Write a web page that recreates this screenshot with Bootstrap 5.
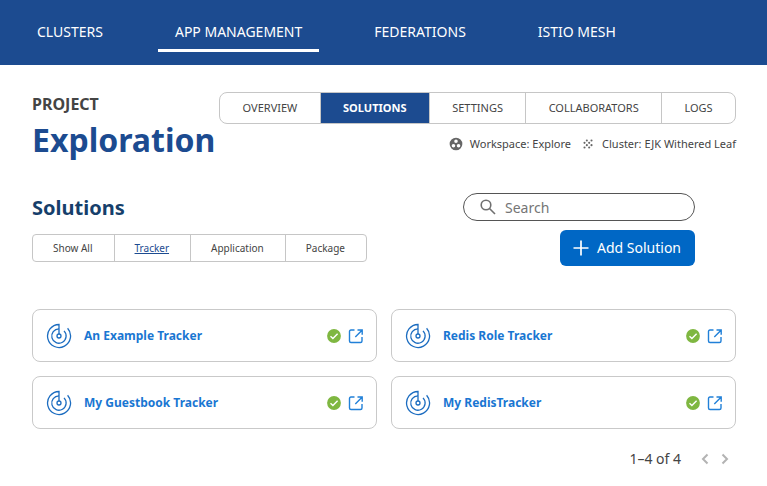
<!DOCTYPE html>
<html lang="en">
<head>
<meta charset="utf-8">
<meta name="viewport" content="width=device-width, initial-scale=1">
<title>Exploration – Solutions</title>
<link href="https://cdn.jsdelivr.net/npm/bootstrap@5.3.0/dist/css/bootstrap.min.css" rel="stylesheet">
<style>
  body { font-family: "Noto Sans", sans-serif; font-size: 14px; line-height: 20px; color: #444; }
  svg { display: block; flex: none; }
  .topbar { background: #1c4b90; padding: 12px 20px 13px; }
  .topbar .nav { gap: 38px; }
  .topbar .nav-link { color: #fff; font-size: 14px; padding: 10px 17px 7px; border-bottom: 3px solid transparent; }
  .topbar .nav-link.active { border-bottom-color: #fff; }
  .page { padding: 27px 31px 16px 32px; }
  .page-title { margin: 0 4px 0 0; }
  .overline { font-size: 16px; line-height: 24px; font-weight: 700; }
  .project-name { font-size: 32px; line-height: 48px; font-weight: 700; color: #1c4b90; }
  .tabs .btn, .filters .btn { --bs-btn-color: #444; --bs-btn-border-color: #c6c6c6; --bs-btn-hover-border-color: #c6c6c6; --bs-btn-active-bg: #1c4b90; --bs-btn-active-color: #fff; --bs-btn-active-border-color: #c6c6c6; white-space: nowrap; }
  .tabs .btn { font-size: 11px; line-height: 16px; padding: 7px 22px; --bs-btn-border-radius: 8px; }
  .tabs .btn.active { font-weight: 700; }
  .filters .btn { font-size: 10px; line-height: 14px; padding: 6px 21px 6px 20px; --bs-btn-border-radius: 4px; }
  .filters .btn.active { --bs-btn-active-bg: #fff; --bs-btn-active-color: #1c4b90; text-decoration: underline; }
  .meta { font-size: 11px; line-height: 16px; gap: 10px; margin-top: 12px; }
  .meta-item { gap: 7px; }
  .solutions-head { margin-top: 29px; padding-right: 41px; }
  .section-title { font-size: 20px; line-height: 30px; font-weight: 700; color: #163f6b; margin-bottom: 11px; }
  .search { width: 232px; height: 28px; border: 1px solid #555; border-radius: 14px; padding: 0 16px; gap: 9px; }
  .search input { font-size: 14px; line-height: 20px; height: 26px; outline: 0; min-width: 0; }
  .search input::placeholder { color: #757575; }
  .btn-add { --bs-btn-bg: #0067c5; --bs-btn-color: #fff; --bs-btn-hover-bg: #00569f; --bs-btn-hover-color: #fff; --bs-btn-border-radius: 6px; font-size: 14px; line-height: 20px; padding: 7px 13px 7px 12px; gap: 8px; margin-top: 9px; }
  .tracker-grid { margin-top: 29px; --bs-gutter-x: 14px; --bs-gutter-y: 14px; }
  .tracker { border: 1px solid #c9c9c9; border-radius: 8px; padding: 0 12px 0 13px; height: 53px; gap: 7px; }
  .tracker-name { font-size: 12px; line-height: 18px; font-weight: 700; color: #1976d2; text-decoration: none; margin-left: 5px; }
  .pager { margin-top: 20px; padding-right: 3px; gap: 4px; }
  .pager-range { margin-right: 12px; }
</style>
<script src="https://cdn.jsdelivr.net/npm/bootstrap@5.3.0/dist/js/bootstrap.bundle.min.js"></script>
</head>
<body>
<svg class="d-none" aria-hidden="true">
  <symbol id="radar" viewBox="0 0 26 26"><g fill="none" stroke="#1b6cc0" stroke-width="1.300"><path d="M13 11V1.500A11.500 11.500 0 1 0 21.600 5.300"/><path d="M13 5.800A7.200 7.200 0 1 0 18 7.900"/><circle cx="13" cy="13" r="2"/></g></symbol>
  <symbol id="check" viewBox="0 0 14 14"><circle cx="7" cy="7" r="6.900" fill="#7fb741"/><path d="M3.500 7.300l2.400 2.300 4.700-4.900" fill="none" stroke="#fff" stroke-width="1.400"/></symbol>
  <symbol id="open" viewBox="0 0 16 16"><path d="M6.500 2H3Q1.500 2 1.500 3.500V13Q1.500 14.500 3 14.500H12.500Q14 14.500 14 13V9M9.500 2H14.200V6.800M14 2.200L7.300 8.900" fill="none" stroke="#2180d8" stroke-width="1.400"/></symbol>
</svg>

<header class="topbar">
  <nav class="nav flex-nowrap text-nowrap" aria-label="Main">
    <a class="nav-link" href="#">CLUSTERS</a>
    <a class="nav-link active" aria-current="page" href="#">APP MANAGEMENT</a>
    <a class="nav-link" href="#">FEDERATIONS</a>
    <a class="nav-link" href="#">ISTIO MESH</a>
  </nav>
</header>

<main class="page">
  <div class="d-flex">
    <h1 class="page-title">
      <span class="overline d-block">PROJECT</span>
      <span class="project-name d-block">Exploration</span>
    </h1>
    <div class="flex-grow-1">
      <div class="tabs btn-group d-flex" role="group" aria-label="Project sections">
        <button type="button" class="btn">OVERVIEW</button>
        <button type="button" class="btn active">SOLUTIONS</button>
        <button type="button" class="btn">SETTINGS</button>
        <button type="button" class="btn">COLLABORATORS</button>
        <button type="button" class="btn">LOGS</button>
      </div>
      <div class="meta d-flex justify-content-end text-nowrap">
        <span class="meta-item d-flex align-items-center"><svg width="14" height="14" viewBox="1 1 22 22" fill="#666"><path fill-rule="evenodd" d="M12 2a10 10 0 1 0 0 20a10 10 0 1 0 0-20zM8 12a2.800 2.800 0 1 1 0 5.600a2.800 2.800 0 1 1 0-5.600zM12 5a2.800 2.800 0 1 1 0 5.600a2.800 2.800 0 1 1 0-5.600zM16 12a2.800 2.800 0 1 1 0 5.600a2.800 2.800 0 1 1 0-5.600z"/></svg>Workspace: Explore</span>
        <span class="meta-item d-flex align-items-center"><svg width="14" height="14" viewBox="0 0 24 24" fill="#666"><circle cx="10" cy="14" r="1.800"/><circle cx="6" cy="10" r="1.800"/><circle cx="6" cy="18" r="1.800"/><circle cx="18" cy="6" r="1.800"/><circle cx="14" cy="18" r="1.800"/><circle cx="18" cy="14" r="1.800"/><circle cx="14" cy="10" r="1.800"/><circle cx="10" cy="6" r="1.800"/></svg>Cluster: EJK Withered Leaf</span>
      </div>
    </div>
  </div>

  <section class="solutions-head d-flex justify-content-between">
    <div>
      <h2 class="section-title">Solutions</h2>
      <div class="filters btn-group" role="group" aria-label="Filter solutions">
        <button type="button" class="btn">Show All</button>
        <button type="button" class="btn active">Tracker</button>
        <button type="button" class="btn">Application</button>
        <button type="button" class="btn">Package</button>
      </div>
    </div>
    <div class="d-flex flex-column align-items-end">
      <div class="search d-flex align-items-center">
        <label for="q"><span class="visually-hidden">Search solutions</span><svg width="16" height="16" viewBox="0 0 16 16" fill="none" stroke="#707070" stroke-width="1.600"><circle cx="6" cy="6" r="4.800"/><path d="M9.500 9.500l5.500 5.500"/></svg></label>
        <input id="q" type="text" class="border-0 p-0 flex-grow-1 bg-transparent" placeholder="Search">
      </div>
      <button type="button" class="btn btn-add d-flex align-items-center"><svg width="16" height="16" viewBox="0 0 16 16" stroke="#fff" stroke-width="1.700"><path d="M8 .5v15M.5 8h15"/></svg>Add Solution</button>
    </div>
  </section>

  <section class="tracker-grid row row-cols-2" aria-label="Trackers">
    <div class="col"><div class="tracker d-flex align-items-center"><svg width="26" height="26"><use href="#radar"/></svg><a class="tracker-name me-auto" href="#">An Example Tracker</a><svg width="14" height="14"><use href="#check"/></svg><a href="#" aria-label="Open An Example Tracker"><svg width="16" height="16"><use href="#open"/></svg></a></div></div>
    <div class="col"><div class="tracker d-flex align-items-center"><svg width="26" height="26"><use href="#radar"/></svg><a class="tracker-name me-auto" href="#">Redis Role Tracker</a><svg width="14" height="14"><use href="#check"/></svg><a href="#" aria-label="Open Redis Role Tracker"><svg width="16" height="16"><use href="#open"/></svg></a></div></div>
    <div class="col"><div class="tracker d-flex align-items-center"><svg width="26" height="26"><use href="#radar"/></svg><a class="tracker-name me-auto" href="#">My Guestbook Tracker</a><svg width="14" height="14"><use href="#check"/></svg><a href="#" aria-label="Open My Guestbook Tracker"><svg width="16" height="16"><use href="#open"/></svg></a></div></div>
    <div class="col"><div class="tracker d-flex align-items-center"><svg width="26" height="26"><use href="#radar"/></svg><a class="tracker-name me-auto" href="#">My RedisTracker</a><svg width="14" height="14"><use href="#check"/></svg><a href="#" aria-label="Open My RedisTracker"><svg width="16" height="16"><use href="#open"/></svg></a></div></div>
  </section>

  <div class="pager d-flex justify-content-end align-items-center">
    <span class="pager-range">1–4 of 4</span>
    <button type="button" class="btn p-0 border-0" disabled aria-label="Previous page"><svg width="16" height="16" viewBox="0 0 16 16" fill="none" stroke="#8c8c8c" stroke-width="2"><path d="M10.500 3.500L6 8l4.500 4.500"/></svg></button>
    <button type="button" class="btn p-0 border-0" disabled aria-label="Next page"><svg width="16" height="16" viewBox="0 0 16 16" fill="none" stroke="#8c8c8c" stroke-width="2"><path d="M5.500 3.500L10 8l-4.500 4.500"/></svg></button>
  </div>
</main>
</body>
</html>
